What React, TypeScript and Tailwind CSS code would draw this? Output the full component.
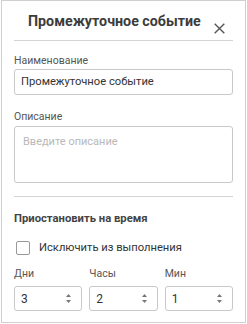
import React from "react";

function Spinner() {
  return (
    <svg width="7" height="11" viewBox="0 0 7 11" className="block">
      <path d="M3.5 1 L6 4 L1 4 Z" fill="#777" />
      <path d="M3.5 10 L6 7 L1 7 Z" fill="#777" />
    </svg>
  );
}

function NumField({ label, value }: { label: string; value: string }) {
  return (
    <div className="flex flex-col flex-1 min-w-0">
      <div className="text-[10.5px] leading-[13px] text-[#555]">{label}</div>
      <div className="mt-[6px] h-[25px] border border-[#c8c8c8] rounded-[3px] flex items-center pl-[6px] pr-[9px]">
        <span className="text-[12px] text-[#333] flex-1">{value}</span>
        <Spinner />
      </div>
    </div>
  );
}

export default function App() {
  return (
    <div
      className="ml-px w-[245px] h-[323px] border border-[#cfcfcf] bg-white px-[12px] flex flex-col"
      style={{ fontFamily: "Roboto, 'Noto Sans', sans-serif" }}
    >
      <div className="flex items-start h-[40px] border-b border-[#d4d4d4]">
        <div className="pl-[14px] pt-[10px] text-[14.25px] leading-[20px] font-bold text-[#3c3c3c] whitespace-nowrap">
          Промежуточное событие
        </div>
        <div className="ml-auto mr-[8px] mt-[22px]">
          <svg width="11" height="11" viewBox="0 0 11 11" className="block">
            <path d="M0.7 0.7 L10.3 10.3 M10.3 0.7 L0.7 10.3" stroke="#555" strokeWidth="1.4" />
          </svg>
        </div>
      </div>

      <div className="mt-[13px] text-[10.5px] leading-[13px] text-[#555]">Наименование</div>
      <div className="mt-[2px] h-[26px] border border-[#c8c8c8] rounded-[3px] flex items-center pl-[6px] text-[11.2px] text-[#333]">
        Промежуточное событие
      </div>

      <div className="mt-[15px] text-[10.5px] leading-[13px] text-[#555]">Описание</div>
      <div className="mt-[3px] h-[57px] border border-[#c8c8c8] rounded-[3px] pl-[8px] pt-[7px] text-[11px] leading-[16px] text-[#b8b8b8]">
        Введите описание
      </div>

      <div className="mt-[13px] border-t border-[#d4d4d4]" />

      <div className="mt-[15px] text-[11.25px] leading-[14px] font-bold text-[#444]">Приостановить на время</div>

      <div className="mt-[15px] flex items-center">
        <div className="ml-[2px] w-[14px] h-[14px] border border-[#999] rounded-[2px]" />
        <div className="ml-[9px] text-[11.2px] leading-[14px] text-[#333]">Исключить из выполнения</div>
      </div>

      <div className="mt-[12px] flex gap-[7px]">
        <NumField label="Дни" value="3" />
        <NumField label="Часы" value="2" />
        <NumField label="Мин" value="1" />
      </div>
    </div>
  );
}
